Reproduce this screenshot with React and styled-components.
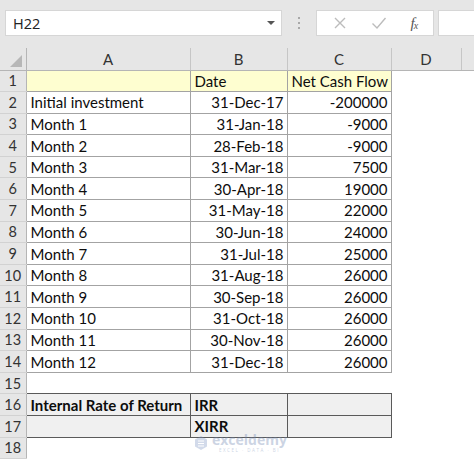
import React from "react";
import styled, { createGlobalStyle } from "styled-components";

const Global = createGlobalStyle`
  html, body { margin: 0; padding: 0; background: #ffffff; }
  body { width: 474px; height: 459px; overflow: hidden; }
`;

const Page = styled.div`
  position: relative;
  width: 474px;
  height: 459px;
  overflow: hidden;
  font-family: Lato, "Open Sans", sans-serif;
`;

const Toolbar = styled.div`
  height: 48px;
  background: #e6e6e6;
  display: flex;
  align-items: flex-start;
  padding: 10px 0 0 5px;
  box-sizing: border-box;
`;

const NameBox = styled.div`
  width: 277px;
  height: 26px;
  box-sizing: border-box;
  background: #fff;
  border: 1px solid #d6d6d6;
  display: flex;
  align-items: center;
  justify-content: space-between;
  padding: 0 6px 0 7px;
  font-family: "Open Sans", "Noto Sans", sans-serif;
  font-size: 14.5px;
  color: #222;
`;

const Caret = styled.span`
  width: 0;
  height: 0;
  border-left: 4px solid transparent;
  border-right: 4px solid transparent;
  border-top: 4px solid #555;
`;

const Grip = styled.div`
  width: 34px;
  height: 26px;
  display: flex;
  flex-direction: column;
  align-items: center;
  justify-content: center;
  gap: 3px;
  span {
    width: 2px;
    height: 2px;
    background: #a8a8a8;
  }
`;

const FxBox = styled.div`
  width: 118px;
  height: 26px;
  box-sizing: border-box;
  background: #fff;
  border: 1px solid #d6d6d6;
  display: flex;
  align-items: center;
  justify-content: space-around;
  padding: 0 4px;
`;

const FxLabel = styled.span`
  font-family: "Liberation Serif", serif;
  font-style: italic;
  font-size: 15px;
  color: #555;
  letter-spacing: -1px;
  sub {
    font-size: 10px;
    vertical-align: -1px;
  }
`;

const FormulaBar = styled.div`
  margin-left: 4px;
  flex: 1;
  height: 26px;
  box-sizing: border-box;
  background: #fff;
  border: 1px solid #d6d6d6;
  border-right: none;
`;

const Sheet = styled.table`
  border-collapse: collapse;
  table-layout: fixed;
  width: 474px;
  font-family: Lato, "Open Sans", sans-serif;
  font-size: 15px;
  color: #0d0d0d;
`;

const ColHead = styled.th`
  height: 22px;
  padding: 0;
  background: #e6e6e6;
  font-weight: 400;
  font-size: 15px;
  color: #333;
  border-right: 1px solid #c6c6c6;
  border-bottom: 1px solid #b5b5b5;
  text-align: center;
  box-sizing: border-box;
  &:last-child { border-right: none; }
`;

const Corner = styled.th`
  position: relative;
  padding: 0;
  background: #e6e6e6;
  border-right: 1px solid #b5b5b5;
  border-bottom: 1px solid #b5b5b5;
  &::after {
    content: "";
    position: absolute;
    right: 4px;
    bottom: 3px;
    width: 0;
    height: 0;
    border-left: 12px solid transparent;
    border-bottom: 12px solid #b7b7b7;
  }
`;

const RowHead = styled.th`
  height: 21.6px;
  padding: 0;
  background: #e6e6e6;
  font-weight: 400;
  font-size: 14.5px;
  color: #333;
  text-align: center;
  border-right: 1px solid #b5b5b5;
  border-bottom: 1px solid #d2d2d2;
  box-sizing: border-box;
`;

const borders = {
  grid: "1px solid #a3a3a3",
  dark: "1px solid #5a5a5a",
};

const Cell = styled.td`
  padding: 0 ${(p) => (p.$right ? "3px" : "4px")} 0 4px;
  height: 21.6px;
  box-sizing: border-box;
  white-space: nowrap;
  overflow: visible;
  text-align: ${(p) => (p.$right ? "right" : "left")};
  font-weight: ${(p) => (p.$bold ? 700 : 400)};
  background: ${(p) =>
    p.$fill === "yellow" ? "#fefed0" : p.$fill === "gray" ? "#f0f0f0" : "#ffffff"};
  border: ${(p) => (p.$border ? borders[p.$border] : "none")};
`;

const Watermark = styled.div`
  position: absolute;
  left: 193px;
  top: 433px;
  display: flex;
  align-items: center;
  gap: 3px;
  opacity: 0.35;
  pointer-events: none;
`;

const WmText = styled.div`
  display: flex;
  flex-direction: column;
  align-items: center;
  line-height: 1;
  color: #6f86b0;
  font-family: "Open Sans", sans-serif;
  b {
    font-size: 14px;
    font-weight: 700;
  }
  small {
    font-size: 4.5px;
    letter-spacing: 1.5px;
    margin-top: 1px;
  }
`;

const rows = [
  ["Initial investment", "31-Dec-17", "-200000"],
  ["Month 1", "31-Jan-18", "-9000"],
  ["Month 2", "28-Feb-18", "-9000"],
  ["Month 3", "31-Mar-18", "7500"],
  ["Month 4", "30-Apr-18", "19000"],
  ["Month 5", "31-May-18", "22000"],
  ["Month 6", "30-Jun-18", "24000"],
  ["Month 7", "31-Jul-18", "25000"],
  ["Month 8", "31-Aug-18", "26000"],
  ["Month 9", "30-Sep-18", "26000"],
  ["Month 10", "31-Oct-18", "26000"],
  ["Month 11", "30-Nov-18", "26000"],
  ["Month 12", "31-Dec-18", "26000"],
];

export default function App() {
  return (
    <Page>
      <Global />
      <Toolbar>
        <NameBox>
          <span>H22</span>
          <Caret />
        </NameBox>
        <Grip>
          <span />
          <span />
          <span />
        </Grip>
        <FxBox>
          <svg width="14" height="14" viewBox="0 0 14 14">
            <path d="M2 2 L12 12 M12 2 L2 12" stroke="#bcbcbc" strokeWidth="1.4" fill="none" />
          </svg>
          <svg width="16" height="14" viewBox="0 0 16 14">
            <path d="M1.5 7.5 L6 12 L14.5 2" stroke="#bcbcbc" strokeWidth="1.4" fill="none" />
          </svg>
          <FxLabel>
            f<sub>x</sub>
          </FxLabel>
        </FxBox>
        <FormulaBar />
      </Toolbar>
      <Sheet>
        <colgroup>
          <col style={{ width: 26 }} />
          <col style={{ width: 164 }} />
          <col style={{ width: 97 }} />
          <col style={{ width: 104 }} />
          <col style={{ width: 70 }} />
          <col />
        </colgroup>
        <thead>
          <tr>
            <Corner />
            <ColHead>A</ColHead>
            <ColHead>B</ColHead>
            <ColHead>C</ColHead>
            <ColHead>D</ColHead>
            <ColHead />
          </tr>
        </thead>
        <tbody>
          <tr>
            <RowHead>1</RowHead>
            <Cell $fill="yellow" $border="grid" />
            <Cell $fill="yellow" $border="grid">Date</Cell>
            <Cell $fill="yellow" $border="grid">Net Cash Flow</Cell>
            <Cell />
            <Cell />
          </tr>
          {rows.map((r, i) => (
            <tr key={i}>
              <RowHead>{i + 2}</RowHead>
              <Cell $border="grid">{r[0]}</Cell>
              <Cell $border="grid" $right>{r[1]}</Cell>
              <Cell $border="grid" $right>{r[2]}</Cell>
              <Cell />
              <Cell />
            </tr>
          ))}
          <tr>
            <RowHead>15</RowHead>
            <Cell />
            <Cell />
            <Cell />
            <Cell />
            <Cell />
          </tr>
          <tr>
            <RowHead>16</RowHead>
            <Cell $fill="gray" $border="dark" $bold>Internal Rate of Return</Cell>
            <Cell $fill="gray" $border="dark" $bold>IRR</Cell>
            <Cell $fill="gray" $border="dark" />
            <Cell />
            <Cell />
          </tr>
          <tr>
            <RowHead>17</RowHead>
            <Cell $fill="gray" $border="dark" />
            <Cell $fill="gray" $border="dark" $bold>XIRR</Cell>
            <Cell $fill="gray" $border="dark" />
            <Cell />
            <Cell />
          </tr>
          <tr>
            <RowHead>18</RowHead>
            <Cell />
            <Cell />
            <Cell />
            <Cell />
            <Cell />
          </tr>
        </tbody>
      </Sheet>
      <Watermark>
        <svg width="16" height="16" viewBox="0 0 16 16">
          <path d="M8 1 L14 4.5 L14 11.5 L8 15 L2 11.5 L2 4.5 Z" fill="#7f97c4" />
          <path d="M5 6 L11 6 M5 8.5 L11 8.5 M5 11 L11 11" stroke="#fff" strokeWidth="1.2" />
        </svg>
        <WmText>
          <b>exceldemy</b>
          <small>EXCEL · DATA · BI</small>
        </WmText>
      </Watermark>
    </Page>
  );
}
